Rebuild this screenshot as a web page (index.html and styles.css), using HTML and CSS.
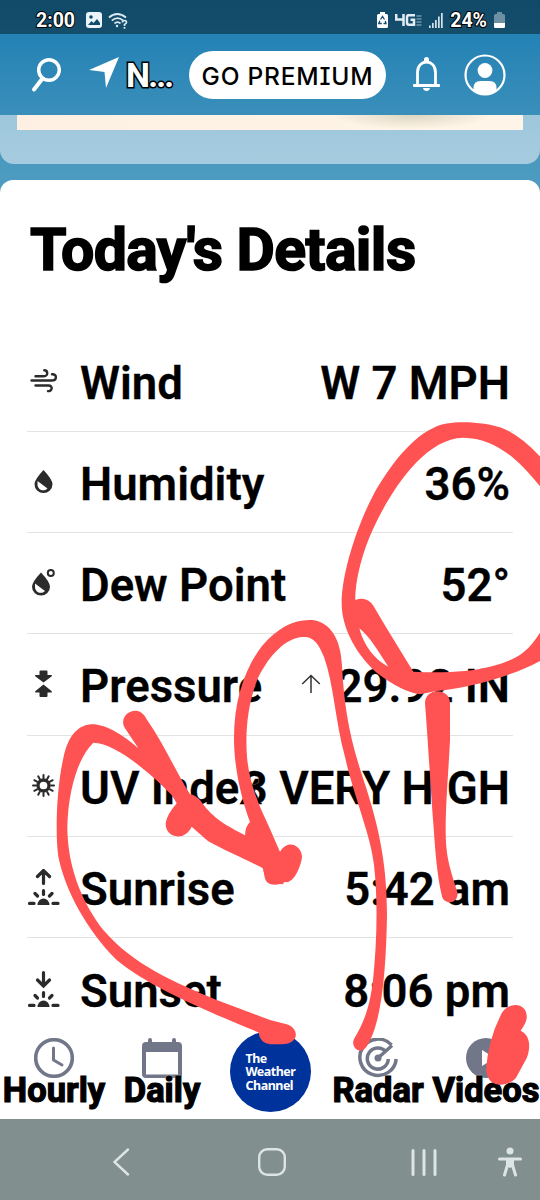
FILE: index.html
```html
<!DOCTYPE html>
<html lang="en">
<head>
    <meta charset="UTF-8">
    <meta name="viewport" content="width=device-width, initial-scale=1.0">
    <title>Today's Details</title>
    <link rel="stylesheet" href="styles.css">
</head>
<body>

<div class="phone">
    <div class="status-bar">
        <span class="status-text">2:00</span>
        <svg class="status-photo" width="16" height="16" viewBox="0 0 16 16"><rect width="16" height="16" rx="3" fill="#eaf4fa"/><circle cx="5" cy="5" r="1.8" fill="#114c6c"/><path d="M2 13l3.5-4 2 2L11 7l3 4v2z" fill="#114c6c"/></svg>
        <svg class="status-wifi" width="20" height="17" viewBox="0 0 20 17" fill="none" stroke="#dcebf3" stroke-width="1.7"><path d="M1 5.5q8-7 17 0M3.8 8.7q5.7-5 11.5 0M6.5 11.5q3-2.6 6 0"/><circle cx="9" cy="14" r="1.2" fill="#dcebf3" stroke="none"/><path d="M14.5 10.5q0-2 2-2t2 1.8q0 1.2-2 2.2v1.500M16.500 15v1.700"/></svg>
        <div class="status-right">
            <svg width="11" height="16" viewBox="0 0 11 16"><path d="M3 0h5v2h1.500q1.500 0 1.500 1.500v11q0 1.500-1.500 1.500h-8q-1.500 0-1.500-1.500v-11q0-1.500 1.500-1.500h1.500z" fill="#fff"/><path d="M3.500 7.500l2-3 2 3M8.300 9l.7 2.500h-2.500M4.800 11.500h-3l1-2.700" fill="none" stroke="#114c6c" stroke-width="1.300"/></svg>
            <svg width="27" height="12" viewBox="0 0 27 12" fill="none" stroke="#e3eef4" stroke-width="2.500"><path d="M1.200 0v5.500h8.500M8.500 0v12M20 1.200h-6q-2 0-2 2v5.500q0 2 2 2h5v-5h-3.500"/><path d="M21.500 2h5M21.500 5h5M21.500 8h5M21.500 11h5" stroke-width="1.200" stroke="#9dbccc"/></svg>
            <svg width="14" height="15" viewBox="0 0 14 15" fill="#d5e4ec"><path d="M0 12.500h1.700v2.500H0zM3 10h1.700v5H3zM6 7h1.700v8H6zM9 3.500h1.700V15H9zM12 0h1.700v15H12z"/></svg>
            <span class="status-text">24%</span>
            <svg width="11" height="16" viewBox="0 0 11 16"><path d="M3 0h5v2h1.500q1.500 0 1.500 1.500v11q0 1.500-1.500 1.500h-8q-1.500 0-1.500-1.500v-11q0-1.500 1.500-1.500h1.500z" fill="#6d90a3"/><path d="M0 11h11v3.500q0 1.500-1.500 1.500h-8Q0 16 0 14.500z" fill="#fff"/></svg>
        </div>
    </div>

    <div class="app-header">
        <svg class="search" width="30" height="36" viewBox="0 0 30 36" fill="none" stroke="#fff"><circle cx="18" cy="13" r="10.300" stroke-width="3.500"/><path d="M11.500 21.500L3 32.500" stroke-width="4" stroke-linecap="round"/></svg>
        <svg class="locate" width="30" height="31" viewBox="0 0 30 31"><path d="M30 0L17 31L15.500 15L0 13z" fill="#fff"/></svg>
        <span class="place">N...</span>
        <button class="premium">GO PREMIUM</button>
        <svg class="bell" width="27" height="35" viewBox="0 0 27 35"><path d="M4.500 29V15.500C4.500 1.500 22.500 1.500 22.500 15.500V29" fill="none" stroke="#fff" stroke-width="2.800"/><rect y="27" width="27" height="3" rx="1" fill="#fff"/><path d="M11 5V2.500q0-2.500 2.500-2.500T16 2.500V5zM10 31h7q-.5 3-3.500 3T10 31z" fill="#fff"/></svg>
        <svg class="avatar" width="42" height="42" viewBox="0 0 42 42"><circle cx="21" cy="21" r="19.500" fill="none" stroke="#fff" stroke-width="2.200"/><circle cx="21" cy="16.500" r="7.400" fill="#fff"/><path d="M9.500 37v-3q0-7 7-7h9q7 0 7 7v3q-11.500 7-23 0z" fill="#fff"/></svg>
    </div>

    <div class="hero">
        <div class="hero-card"><div class="hero-photo"></div></div>
    </div>

    <div class="details">
        <h2>Today's Details</h2>
        <div class="row">
            <svg class="row-icon" width="34" height="36" viewBox="0 0 34 36" fill="none" stroke="#2b2b2b" stroke-width="2.400" stroke-linecap="round"><path d="M8.500 13.200h8.500c4.500 0 4-6 .3-6M4.500 17.500h20c6 0 5.500-6.800.5-6.200M8.500 22.500h13c5 0 3.500 6.300-.5 5.600"/></svg>
            <span class="label">Wind</span><span class="value">W 7 MPH</span>
        </div>
        <div class="row">
            <svg class="row-icon" width="34" height="36" viewBox="0 0 34 36"><path d="M16.500 6q9 9.500 9 14.300a9 8.700 0 0 1-18 0Q7.500 15.500 16.500 6z" fill="#2b2b2b"/><path d="M10.500 17l10 7.500c-4 4-10 1-10-4z" fill="#fff"/></svg>
            <span class="label">Humidity</span><span class="value">36%</span>
        </div>
        <div class="row">
            <svg class="row-icon" width="34" height="36" viewBox="0 0 34 36"><path d="M14 7.500q9 9.500 9 14.300a9 8.700 0 0 1-18 0Q5 17 14 7.500z" fill="#2b2b2b"/><path d="M8 18.500l10 7.500c-4 4-10 1-10-4z" fill="#fff"/><circle cx="23.800" cy="8" r="3" fill="none" stroke="#2b2b2b" stroke-width="2"/></svg>
            <span class="label">Dew Point</span><span class="value">52°</span>
        </div>
        <div class="row">
            <svg class="row-icon" width="34" height="36" viewBox="0 0 34 36" fill="#2b2b2b"><path d="M12.500 5.500q0-1 1-1h6q1 0 1 1V9h4q1 .5 0 1.500l-8 6-8-6q-1-1 0-1.500h4zM12.500 30q0 1 1 1h6q1 0 1-1v-3.500h4q1-.5 0-1.500l-8-6.500-8 6.500q-1 1 0 1.500h4z"/></svg>
            <span class="label">Pressure</span><span class="value"><svg class="trend" width="20" height="20" viewBox="0 0 20 20" fill="none" stroke="#333" stroke-width="1.500"><path d="M10 19V1.500M1.200 10L10 1.500l8.800 8.500"/></svg>29.92 IN</span>
        </div>
        <div class="row">
            <svg class="row-icon" width="34" height="36" viewBox="0 0 34 36" fill="none" stroke="#2b2b2b"><circle cx="16.500" cy="17.500" r="5.500" stroke-width="3.300"/><path stroke-width="2" stroke-linecap="round" d="M16.500 10V7M16.500 25v3M9 17.500H6M24 17.500h3M12.700 11l-1.500-2.700M20.200 11l1.500-2.700M12.700 24l-1.500 2.700M20.200 24l1.500 2.700M10 13.700l-2.700-1.500M23 13.700l2.700-1.500M10 21.300l-2.700 1.500M23 21.300l2.700 1.500"/></svg>
            <span class="label">UV Index</span><span class="value">3 VERY HIGH</span>
        </div>
        <div class="row">
            <svg class="row-icon" width="34" height="36" viewBox="0 0 34 36" fill="none" stroke="#2b2b2b" stroke-width="3.200" stroke-linecap="round"><path d="M16.500 14.500V1.700M10.500 7.500l6-6 6 6M16.500 21.500v4M8 24.500l2.500 2.500M25 24.500L22.500 27M2.500 34.400H7M26 34.400h5"/><path d="M10.500 36a6 6.500 0 0 1 12 0z" fill="#2b2b2b" stroke="none"/></svg>
            <span class="label">Sunrise</span><span class="value">5:42 am</span>
        </div>
        <div class="row">
            <svg class="row-icon" width="34" height="36" viewBox="0 0 34 36" fill="none" stroke="#2b2b2b" stroke-width="3.200" stroke-linecap="round"><path d="M16.500 1.700v13M10.500 9l6 6 6-6M16.500 21.500v4M8 24.500l2.500 2.500M25 24.500L22.500 27M2.500 34.400H7M26 34.400h5"/><path d="M10.500 36a6 6.500 0 0 1 12 0z" fill="#2b2b2b" stroke="none"/></svg>
            <span class="label">Sunset</span><span class="value">8:06 pm</span>
        </div>
    </div>

    <div class="tabs">
        <div class="tab">
            <svg width="40" height="40" viewBox="0 0 40 40" fill="none" stroke="#717789"><circle cx="20" cy="20" r="18.300" stroke-width="3.600"/><path d="M19.500 10v12l8.500 5" stroke-width="3" stroke-linecap="round" stroke-linejoin="round"/></svg>
            <span>Hourly</span>
        </div>
        <div class="tab">
            <svg width="40" height="40" viewBox="0 0 40 40" fill="#717789"><path fill-rule="evenodd" d="M4 4h2V2q0-2 2-2t2 2v2h20V2q0-2 2-2t2 2v2h2q4 0 4 4v28q0 4-4 4H4q-4 0-4-4V8q0-4 4-4zM4 14v22.500h32V14z"/></svg>
            <span>Daily</span>
        </div>
        <div class="tab">
            <div class="logo">The Weather Channel</div>
        </div>
        <div class="tab">
            <svg width="40" height="40" viewBox="0 0 40 40" fill="none" stroke="#717789" stroke-width="3.500"><path d="M33.500 7A18.200 18.200 0 1 0 38.200 21M28 14A10.500 10.500 0 1 0 30.300 21M20 20L34 7.500"/><circle cx="20" cy="20" r="3.500" fill="#717789" stroke="none"/></svg>
            <span>Radar</span>
        </div>
        <div class="tab">
            <svg width="40" height="40" viewBox="0 0 40 40"><circle cx="20" cy="20" r="20" fill="#717789"/><path d="M16 12l13 8-13 8z" fill="#fff"/></svg>
            <span>Videos</span>
        </div>
    </div>

    <div class="system-nav">
        <svg class="back" width="17" height="28" viewBox="0 0 17 28"><path d="M15 1.500L1.500 14 15 26.500"/></svg>
        <svg class="home" width="28" height="28" viewBox="0 0 28 28"><rect x="1.200" y="1.200" width="25.600" height="25.600" rx="8"/></svg>
        <svg class="recents" width="26" height="27" viewBox="0 0 26 27"><path d="M2 1.500v24M13 1.500v24M24 1.500v24"/></svg>
        <svg class="access" width="24" height="30" viewBox="0 0 24 30"><path d="M1.500 12h21M12 14v4M9.500 18l-3 10M14.500 18l3 10"/><path class="solid" d="M8 11h8v8l-4 2-4-2z"/><circle class="solid" cx="12" cy="4" r="3.500"/></svg>
    </div>

    <svg class="marker" width="540" height="1200" viewBox="0 0 1620 3600">
        <!-- ring round humidity and dew point -->
        <path transform="translate(810 1200)" fill-rule="evenodd" d="M815 175Q750 103 690 82C650 68 540 55 490 84C410 120 340 230 310 285C260 380 215 520 215 610C215 690 265 770 320 818Q395 875 450 883L500 873C580 866 730 830 815 780V690C770 765 730 782 660 800C600 815 520 820 430 815L350 685L310 617Q290 587 256 600C256 520 290 425 315 375C360 280 460 115 580 113C670 115 735 165 815 265zM268 685C300 710 325 755 355 800C315 780 280 735 268 685z"/>
        <path transform="translate(810 1980)" d="M465 130C465 82 540 82 540 130V240C535 350 522 480 529 560C533 610 548 650 563 700C563 735 520 735 515 705C500 640 495 560 490 490C483 400 473 230 465 130z"/>
        <!-- long loop down to the radar tab -->
        <path transform="scale(3)" d="M270 884C263 881 265 873 263 869L245 837Q245 826 250 822C240 795 234 765 234 738C234 700 245 668 262 646C278 627 295 619 312 620C331 622 341 640 342 666C344 704 349 735 361 772C377 820 387 858 387 915C386 970 382 1022 367 1046C361 1056 350 1048 354 1039C366 1019 370 1004 373 980C377 942 378 900 374 865C371 836 354 797 345 757C335 720 334 685 324 657C318 642 312 636 303 637C286 638 270 654 258 678C248 703 245 730 247 757C250 790 264 815 270 829L280 852C288 838 302 846 302 857C301 866 294 884 285 882Q278 886 270 884z"/>
        <path transform="translate(0 2100)" d="M415 145L375 85C350 45 415 5 440 58C490 130 520 200 570 283Q585 285 600 300C635 350 665 370 740 408L850 460L850 553L810 550Q790 530 790 505C720 470 640 435 620 420L575 380C555 425 495 415 497 370Q500 345 530 310L515 285C450 220 350 130 280 128C235 170 205 270 202 380C202 490 240 600 310 690C400 795 520 845 650 900L810 960L860 973C898 985 900 1032 845 1033L810 1033Q780 1030 775 997C640 940 460 870 350 780C260 690 195 570 175 470C165 400 170 260 190 175C205 100 240 70 285 73Q340 80 415 145z"/>
        <path transform="translate(810 3000)" d="M690 50C710 0 775 5 770 55Q768 70 752 92C785 107 780 150 770 175L738 233C715 260 655 270 648 210Q655 120 690 50z"/>
    </svg>
</div>

</body>
</html>
```
FILE: styles.css
```css
* {
    box-sizing: border-box;
}
body {
    margin: 0;
    font-family: Roboto, "Liberation Sans", sans-serif;
}
svg {
    display: block;
    flex: none;
}
.phone {
    position: relative;
    width: 540px;
    height: 1200px;
    overflow: hidden;
    display: flex;
    flex-direction: column;
    background: linear-gradient(#2583b6, #4d9bc0 180px);
}
.status-bar {
    height: 34px;
    flex: none;
    padding: 6px 35px 0 36px;
    display: flex;
    align-items: center;
    background: linear-gradient(#104a69, #154e6b);
}
.status-text {
    color: #fff;
    font-size: 19.5px;
    font-weight: 700;
    -webkit-text-stroke: 2px #000;
    paint-order: stroke fill;
}
.status-photo {
    margin-left: 11px;
}
.status-wifi {
    margin-left: 6px;
}
.status-right {
    margin-left: auto;
    display: flex;
    align-items: center;
    gap: 7px;
}
.app-header {
    height: 81px;
    flex: none;
    display: flex;
    align-items: center;
    padding: 0 34px 0 31px;
    background: linear-gradient(#2482b5, #3a8fba);
}
.locate {
    margin: -5px 0 0 28px;
}
.place {
    width: 56px;
    margin: 0 0 0 7px;
    color: #fff;
    font-size: 34px;
    font-weight: 700;
    letter-spacing: -1.8px;
    -webkit-text-stroke: 3px #000;
    paint-order: stroke fill;
}
.premium {
    width: 197px;
    height: 48px;
    flex: none;
    margin-left: 9px;
    padding: 2px 0 0;
    border: none;
    border-radius: 24px;
    background: #fff;
    color: #000;
    font-family: Inter, sans-serif;
    font-size: 24.5px;
    font-weight: 500;
    letter-spacing: 0.8px;
    white-space: nowrap;
    font-feature-settings: "ss02", "cv08";
}
.bell {
    margin-left: 27px;
}
.avatar {
    margin-left: 24px;
}
.hero {
    height: 65px;
    flex: none;
    background: linear-gradient(#4193bd, #4d9bc0);
}
.hero-card {
    height: 49px;
    padding: 0 17px;
    border-radius: 0 0 14px 14px;
    background: linear-gradient(#9ec7dc, #a6cbdf);
}
.hero-photo {
    height: 15px;
    background: radial-gradient(ellipse 80px 14px at 395px 0, #ddd6c2, transparent), linear-gradient(90deg, #fdf0e2, #fef5e8);
}
.details {
    height: 850px;
    flex: none;
    padding: 35px 27px 0;
    border-radius: 13px 13px 0 0;
    background: #fff;
    overflow: hidden;
}
.details h2 {
    height: 115.5px;
    margin: 0 0 0 3px;
    font-size: 59px;
    line-height: 70px;
    font-weight: 700;
    letter-spacing: -0.6px;
    -webkit-text-stroke: 1.6px #000;
    white-space: nowrap;
}
.row {
    height: 101.25px;
    padding-top: 5px;
    display: flex;
    align-items: center;
    border-bottom: 1px solid #e3e3e3;
    font-size: 45.5px;
    font-weight: 600;
    white-space: nowrap;
}
.row:last-child {
    border-bottom: none;
}
.row-icon {
    margin-top: -5px;
}
.label {
    width: 0;
    flex: 1;
    margin-left: 19px;
}
.label,
.value {
    -webkit-text-stroke: 0.3px #000;
}
.value {
    display: flex;
    align-items: center;
    padding-right: 3px;
    text-shadow: 0 0 1px #fff;
}
.trend {
    margin: -6px 16px 0 0;
}
.tabs {
    height: 89px;
    flex: none;
    display: grid;
    grid-template-columns: repeat(5, 108px);
    background: #fff;
}
.tab {
    display: flex;
    flex-direction: column;
    align-items: center;
    padding-top: 8px;
}
.tab span {
    margin-top: -8px;
    font-size: 34.5px;
    line-height: 40px;
    font-weight: 700;
    text-shadow: 0 0 2px #fff, 0 0 2px #fff;
    -webkit-text-stroke: 1.2px #000;
}
.logo {
    width: 81px;
    height: 81px;
    margin-top: -7px;
    padding: 21px 14px 0 16px;
    border-radius: 50%;
    background: #00329c;
    color: #fff;
    font-family: "Noto Sans", sans-serif;
    font-size: 12.5px;
    line-height: 13.3px;
    font-weight: 700;
    letter-spacing: -0.5px;
}
.system-nav {
    height: 81px;
    flex: none;
    display: flex;
    align-items: center;
    padding: 5px 18px 0 113px;
    background: #81908e;
    fill: none;
    stroke: #dce5e4;
    stroke-width: 2.4px;
    stroke-linecap: round;
}
.home {
    margin-left: 128px;
}
.recents {
    margin-left: 125px;
    stroke-width: 3px;
}
.access {
    margin-left: 61px;
    stroke-width: 3px;
}
.solid {
    fill: #dce5e4;
    stroke: none;
}
.marker {
    position: absolute;
    top: 0;
    left: 0;
    fill: #ff5252;
}
```
